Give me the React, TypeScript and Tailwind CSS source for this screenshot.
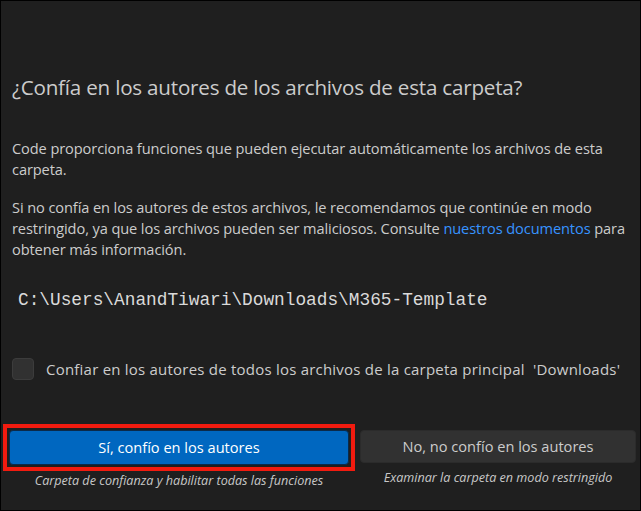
const sans = "font-['Segoe_UI','Open_Sans',sans-serif]";

function App() {
  return (
    <div className={`w-[641px] h-[511px] bg-[#1f1f1f] text-[#cccccc] border border-black overflow-hidden ${sans}`}>
      <div className="pl-[11px] pr-[6px]">
        <h1 className="mt-[72px] text-[20.6px] leading-[28px] tracking-[-0.2px] font-normal">
          ¿Confía en los autores de los archivos de esta carpeta?
        </h1>

        <p className="mt-[37px] text-[14.6px] leading-[21px] tracking-[-0.1px]">
          Code proporciona funciones que pueden ejecutar automáticamente los archivos de esta
          <br />
          carpeta.
        </p>

        <p className="mt-[17px] text-[14.6px] leading-[21px] tracking-[-0.1px]">
          Si no confía en los autores de estos archivos, le recomendamos que continúe en modo
          <br />
          restringido, ya que los archivos pueden ser maliciosos. Consulte{' '}
          <a className="text-[#3794ff]">nuestros documentos</a> para
          <br />
          obtener más información.
        </p>

        <div className="mt-[28px] pl-[6px] font-['Liberation_Mono',monospace] text-[17.8px] leading-[24px] text-[#dadada]">
          C:\Users\AnandTiwari\Downloads\M365-Template
        </div>

        <label className="mt-[46px] flex items-center gap-[12px]">
          <span className="w-[22px] h-[22px] shrink-0 rounded-[4px] bg-[#313131] border border-[#3c3c3c]" />
          <span className="text-[15px] leading-[22px] tracking-[0.22px] whitespace-nowrap">
            Confiar en los autores de todos los archivos de la carpeta principal&nbsp; 'Downloads'
          </span>
        </label>
      </div>

      <div className="mt-[44px] pl-[2px] pr-[4px] flex gap-[5px]">
        <div className="w-[352px] flex flex-col items-center">
          <div className="w-full border-[4px] border-[#f21b0f] p-[2px]">
            <button className="w-full h-[35px] rounded-[4px] bg-[#0067c0] border border-[#0b2a4a] text-white text-[14.6px]">
              Sí, confío en los autores
            </button>
          </div>
          <span className="mt-[1px] text-[12.6px] leading-[18px] italic text-[#c8c8c8]">
            Carpeta de confianza y habilitar todas las funciones
          </span>
        </div>
        <div className="flex-1 flex flex-col items-center pt-[6px]">
          <button className="w-full h-[33px] rounded-[4px] bg-[#313131] border border-[#2b2b2b] text-[#cccccc] text-[14.6px]">
            No, no confío en los autores
          </button>
          <span className="mt-[6px] text-[12.6px] leading-[18px] italic text-[#c8c8c8]">
            Examinar la carpeta en modo restringido
          </span>
        </div>
      </div>
    </div>
  );
}

export default App;
